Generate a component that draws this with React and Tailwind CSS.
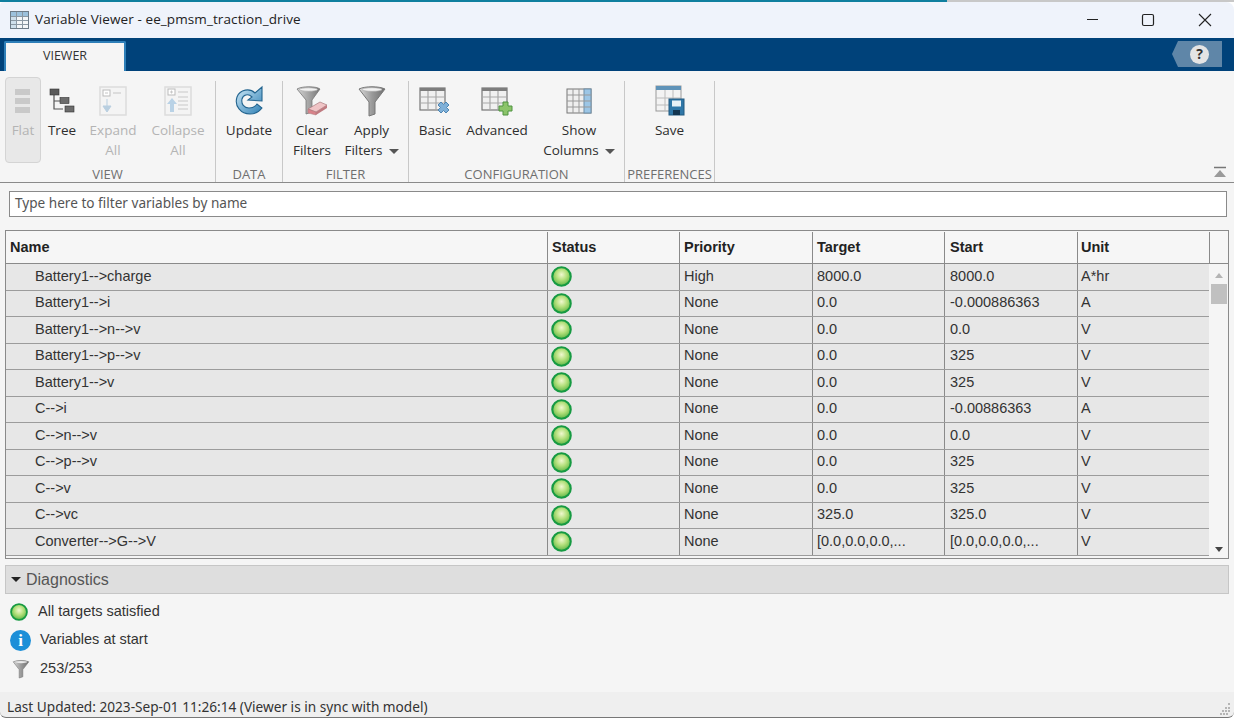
import React from "react";

const ui = "font-['Open_Sans','Noto_Sans',sans-serif]";

function Ball({ size = 21 }) {
  return (
    <svg width={size} height={size} viewBox="0 0 20 20" className="shrink-0">
      <defs>
        <radialGradient id="ballg" cx="50%" cy="40%" r="58%">
          <stop offset="0%" stopColor="#f0f8cf" />
          <stop offset="50%" stopColor="#b4e07c" />
          <stop offset="100%" stopColor="#62b848" />
        </radialGradient>
      </defs>
      <circle cx="10" cy="10" r="8.800" fill="url(#ballg)" stroke="#169a42" strokeWidth="2" />
    </svg>
  );
}

function Funnel({ w = 30, h = 32 }) {
  return (
    <svg width={w} height={h} viewBox="0 0 30 32">
      <defs>
        <linearGradient id="fg" x1="0" x2="1" y1="0" y2="0">
          <stop offset="0" stopColor="#d8d8d8" />
          <stop offset="0.5" stopColor="#9a9a9a" />
          <stop offset="1" stopColor="#6f6f6f" />
        </linearGradient>
      </defs>
      <path d="M2 4 C8 1 22 1 28 4 L18 17 L18 29 L12 31 L12 17 Z" fill="url(#fg)" stroke="#777" strokeWidth="1" />
      <ellipse cx="15" cy="4.500" rx="10" ry="1.800" fill="#f2f2f2" stroke="#aaa" strokeWidth="0.600" />
    </svg>
  );
}

function TableGlyph({ children }) {
  return (
    <svg width="32" height="30" viewBox="0 0 32 30">
      <rect x="1" y="2" width="25" height="22" fill="#f0f0f0" stroke="#777" strokeWidth="1.200" />
      <rect x="1" y="2" width="25" height="3" fill="#7d7d7d" />
      <path d="M9 5V24M17 5V24M1 11H26M1 17H26" stroke="#a8a8a8" strokeWidth="1.200" fill="none" />
      {children}
    </svg>
  );
}

const icons = {
  flat: (
    <svg width="18" height="26" viewBox="0 0 18 26">
      <rect x="1" y="1" width="15" height="6" fill="#c9c9c9" />
      <rect x="1" y="10" width="15" height="6" fill="#c9c9c9" />
      <rect x="1" y="19" width="15" height="6" fill="#c9c9c9" />
    </svg>
  ),
  tree: (
    <svg width="26" height="26" viewBox="0 0 26 26">
      <path d="M5 6V21H14M5 13H11" stroke="#555" strokeWidth="1.200" fill="none" />
      <rect x="1" y="1" width="9" height="6" fill="#5a5a5a" stroke="#333" strokeWidth="0.600" />
      <rect x="11" y="9.500" width="9" height="6" fill="#6c6c6c" stroke="#333" strokeWidth="0.600" />
      <rect x="16" y="18" width="9" height="6" fill="#6c6c6c" stroke="#333" strokeWidth="0.600" />
    </svg>
  ),
  expand: (
    <svg width="28" height="30" viewBox="0 0 28 30">
      <rect x="1" y="1" width="26" height="28" fill="#f4f4f4" stroke="#dcdcdc" strokeWidth="1.500" />
      <rect x="4" y="4" width="7" height="6" fill="#fff" stroke="#bbb" />
      <path d="M6 7H9M14 7H22" stroke="#c4c4c4" />
      <path d="M8 13V20M4 20H12L8 26Z" fill="#b9cfe0" stroke="#b9cfe0" />
    </svg>
  ),
  collapse: (
    <svg width="28" height="30" viewBox="0 0 28 30">
      <rect x="1" y="1" width="26" height="28" fill="#f4f4f4" stroke="#dcdcdc" strokeWidth="1.500" />
      <rect x="4" y="3" width="7" height="6" fill="#fff" stroke="#bbb" />
      <path d="M7.500 4.500V7.500M6 6H9M14 6H24M14 11H24M14 15H24M14 19H24M14 23H24" stroke="#c8c8c8" />
      <path d="M8 12L3 18H6V26H10V18H13Z" fill="#b9d2e6" />
    </svg>
  ),
  update: (
    <svg width="32" height="32" viewBox="0 0 32 32">
      <defs>
        <linearGradient id="ug" x1="0" x2="1" y1="0" y2="1">
          <stop offset="0" stopColor="#cfeaf8" />
          <stop offset="1" stopColor="#2f80b5" />
        </linearGradient>
      </defs>
      <path d="M22 8 C17 3 7 4 4 12 C1 21 8 29 17 29 C22 29 26 27 29 23 L24 19 C22 22 19 23 16 23 C11 23 8 19 9 14 C10 10 15 8 19 12 L15 15 L29 16 L29 2 Z" fill="url(#ug)" stroke="#23648f" strokeWidth="1.100" />
    </svg>
  ),
  clear: (
    <svg width="32" height="32" viewBox="0 0 32 32">
      <defs>
        <linearGradient id="cg" x1="0" x2="1" y1="0" y2="0">
          <stop offset="0" stopColor="#d4d4d4" />
          <stop offset="0.6" stopColor="#9c9c9c" />
          <stop offset="1" stopColor="#777" />
        </linearGradient>
      </defs>
      <path d="M1 4 C6 1 20 1 24 4 L16 15 L16 27 L10 29 L10 15 Z" fill="url(#cg)" stroke="#777" strokeWidth="0.800" />
      <ellipse cx="12.500" cy="4.500" rx="9" ry="1.700" fill="#f2f2f2" stroke="#aaa" strokeWidth="0.600" />
      <path d="M12 24 L24 17 L31 20 L20 27 Z" fill="#f0c4c6" stroke="#a87a7d" strokeWidth="0.700" />
      <path d="M12 24 L20 27 L20 30 L12 28 Z" fill="#d9828a" stroke="#a87a7d" strokeWidth="0.500" />
      <path d="M20 27 L31 20 L31 23 L20 30 Z" fill="#bf7a80" />
    </svg>
  ),
  basic: (
    <TableGlyph>
      <path d="M19 19 L22 16 L24.500 18.500 L27 16 L30 19 L27.500 21.500 L30 24 L27 27 L24.500 24.500 L22 27 L19 24 L21.500 21.500 Z" fill="#7fb0d8" stroke="#4d85b3" />
    </TableGlyph>
  ),
  advanced: (
    <TableGlyph>
      <path d="M22 16H27V20H31V25H27V29H22V25H18V20H22Z" fill="#8cc46a" stroke="#4f9440" />
    </TableGlyph>
  ),
  columns: (
    <svg width="26" height="26" viewBox="0 0 26 26">
      <rect x="1" y="1" width="24" height="24" fill="#efefef" stroke="#777" />
      <rect x="18" y="1" width="7" height="24" fill="#9cc6e6" stroke="#6d8ea8" />
      <path d="M1 7H25M1 13H25M1 19H25M7 1V25M13 1V25" stroke="#999" fill="none" />
    </svg>
  ),
  save: (
    <svg width="30" height="32" viewBox="0 0 30 32">
      <rect x="1" y="1" width="25" height="25" fill="#f3f3f3" stroke="#999" />
      <rect x="1" y="1" width="25" height="4" fill="#5f93b8" />
      <path d="M10 5V26M18 5V20M1 13H26M1 20H18" stroke="#bbb" fill="none" />
      <rect x="14" y="14" width="15" height="16" fill="#2f77a8" stroke="#235a80" />
      <rect x="17" y="15.500" width="9" height="6" fill="#e8f1f7" />
      <rect x="18" y="25" width="7" height="5" fill="#12344f" />
    </svg>
  ),
};

function Btn({ w, icon, lines, caret, disabled, active }) {
  return (
    <div
      className={`relative flex flex-col items-center shrink-0 ${
        active
          ? "bg-[#e8e8e8] border border-[#d4d4d4] rounded-[4px] mt-[1px] h-[86px] pt-[4px]"
          : "h-[86px] pt-[6px]"
      }`}
      style={{ width: w }}
    >
      <div className="h-[38px] flex items-center justify-center">{icon}</div>
      <div
        className={`text-[13.500px] leading-[20px] text-center whitespace-nowrap ${
          disabled ? "text-[#b4b4b4]" : "text-[#2e2e2e]"
        }`}
      >
        {lines.map((l, i) => (
          <div key={i}>
            {l}
            {caret && i === lines.length - 1 ? (
              <span className="inline-block align-middle ml-[6px] w-0 h-0 border-x-[5px] border-x-transparent border-t-[5px] border-t-[#555]" />
            ) : null}
          </div>
        ))}
      </div>
    </div>
  );
}

function Group({ w, label, children, pl = 0 }) {
  return (
    <div className="flex flex-col shrink-0" style={{ width: w }}>
      <div className="flex h-[86px] mt-[5px]" style={{ paddingLeft: pl }}>{children}</div>
      <div className="text-[13px] leading-[18px] text-center text-[#6f6f6f] mt-[3px]">{label}</div>
    </div>
  );
}

const Sep = () => <div className="w-px bg-[#c8c8c8] mt-[10px] h-[101px] shrink-0" />;

const rows = [
  ["Battery1-->charge", "High", "8000.0", "8000.0", "A*hr"],
  ["Battery1-->i", "None", "0.0", "-0.000886363", "A"],
  ["Battery1-->n-->v", "None", "0.0", "0.0", "V"],
  ["Battery1-->p-->v", "None", "0.0", "325", "V"],
  ["Battery1-->v", "None", "0.0", "325", "V"],
  ["C-->i", "None", "0.0", "-0.00886363", "A"],
  ["C-->n-->v", "None", "0.0", "0.0", "V"],
  ["C-->p-->v", "None", "0.0", "325", "V"],
  ["C-->v", "None", "0.0", "325", "V"],
  ["C-->vc", "None", "325.0", "325.0", "V"],
  ["Converter-->G-->V", "None", "[0.0,0.0,0.0,...", "[0.0,0.0,0.0,...", "V"],
];

const hdr = [
  ["Status", "w-[132px] pl-[4px]"],
  ["Priority", "w-[133px] pl-[4px]"],
  ["Target", "w-[132px] pl-[4px]"],
  ["Start", "w-[133px] pl-[5px]"],
  ["Unit", "w-[132px] pl-[3px]"],
];

export default function App() {
  return (
    <div className={`w-[1234px] h-[720px] overflow-hidden bg-white flex flex-col relative ${ui}`}>
      {/* desktop strip */}
      <div className="h-[2px] flex shrink-0">
        <div className="w-[947px] bg-[#0f7f9f]" />
        <div className="flex-1 bg-[#c8c8c8]" />
      </div>

      {/* title bar */}
      <div className="h-[36px] bg-[#eff3fb] flex items-center shrink-0 rounded-tr-[8px] rounded-tl-[4px] pb-[1px]">
        <svg width="19" height="18" viewBox="0 0 19 18" className="ml-[10px] shrink-0">
          <rect x="0.500" y="0.500" width="18" height="17" fill="#f4f6f8" stroke="#6e7c88" />
          <rect x="1" y="1" width="17" height="4" fill="#9cc1dc" />
          <rect x="1" y="5" width="5" height="12" fill="#cfe0ec" />
          <path d="M6.500 1V17M12.500 1V17M1 5.500H18M1 9.500H18M1 13.500H18" stroke="#8b98a3" fill="none" />
        </svg>
        <span className="ml-[6px] text-[13.500px] text-[#222] tracking-[0.1px]">Variable Viewer - ee_pmsm_traction_drive</span>
        <div className="ml-auto flex items-center">
          <svg width="14" height="14" viewBox="0 0 14 14" className="mr-[41px]"><path d="M1 6.500H12" stroke="#222" strokeWidth="1" /></svg>
          <svg width="14" height="14" viewBox="0 0 14 14" className="mr-[43px]"><rect x="1.500" y="1.500" width="11" height="11" rx="1.500" fill="none" stroke="#222" strokeWidth="1.200" /></svg>
          <svg width="14" height="14" viewBox="0 0 14 14" className="mr-[22px]"><path d="M1 1L13 13M13 1L1 13" stroke="#222" strokeWidth="1.100" /></svg>
        </div>
      </div>

      {/* tab band */}
      <div className="h-[33px] bg-[#00427a] flex items-end shrink-0 relative">
        <div className="ml-[4px] w-[122px] h-[30px] bg-[#f5f5f5] border-t-[2px] border-x-[2px] border-[#2e7fb8] rounded-t-[2px] flex items-center justify-center text-[12.500px] text-[#333] pb-[2px]">
          VIEWER
        </div>
        <div className="ml-auto mr-[12px] mb-[4px] w-[50px] h-[26px] flex items-center justify-center bg-[#5f86a8] [clip-path:polygon(12%_0,100%_0,100%_100%,12%_100%,0_50%)]">
          <span className="ml-[5px] w-[19px] h-[19px] rounded-full bg-[#e4e4e4] flex items-center justify-center text-[14px] leading-none font-bold text-[#333]">?</span>
        </div>
      </div>

      {/* ribbon */}
      <div className="h-[112px] bg-[#f5f5f5] border-b border-[#8a8a8a] flex shrink-0 relative">
        <Group w={215} label="VIEW" pl={5}>
          <Btn w={36} icon={icons.flat} lines={["Flat"]} disabled active />
          <Btn w={42} icon={icons.tree} lines={["Tree"]} />
          <Btn w={60} icon={icons.expand} lines={["Expand", "All"]} disabled />
          <Btn w={70} icon={icons.collapse} lines={["Collapse", "All"]} disabled />
        </Group>
        <Sep />
        <Group w={66} label="DATA">
          <Btn w={66} icon={icons.update} lines={["Update"]} />
        </Group>
        <Sep />
        <Group w={125} label="FILTER">
          <Btn w={58} icon={icons.clear} lines={["Clear", "Filters"]} />
          <Btn w={61} icon={<Funnel w={30} h={32} />} lines={["Apply", "Filters"]} caret />
        </Group>
        <Sep />
        <Group w={215} label="CONFIGURATION">
          <Btn w={52} icon={icons.basic} lines={["Basic"]} />
          <Btn w={72} icon={icons.advanced} lines={["Advanced"]} />
          <Btn w={92} icon={icons.columns} lines={["Show", "Columns"]} caret />
        </Group>
        <Sep />
        <Group w={89} label="PREFERENCES">
          <Btn w={89} icon={icons.save} lines={["Save"]} />
        </Group>
        <Sep />
        <svg width="14" height="14" viewBox="0 0 14 14" className="absolute right-[7px] bottom-[2px]">
          <path d="M1 1.500H13" stroke="#777" strokeWidth="1.500" />
          <path d="M7 4L13 11H1Z" fill="#9a9a9a" />
        </svg>
      </div>

      {/* body */}
      <div className="flex-1 bg-[#f5f5f5] flex flex-col min-h-0 px-[5px]">
        <div className="pt-[8px] pl-[4px] pr-[2px]">
          <div className="h-[26px] bg-white border border-[#8a8a8a] flex items-center pl-[5px] pb-[1px] text-[13.600px] text-[#555] font-['Noto_Sans',sans-serif]">
            Type here to filter variables by name
          </div>
        </div>

        {/* table */}
        <div className="mt-[13px] w-[1224px] h-[329px] border border-[#8a8a8a] bg-[#f5f5f5] flex flex-col overflow-hidden font-['Liberation_Sans',sans-serif] text-[14.500px] text-[#333] shrink-0">
          <div className="h-[33px] flex border-b border-[#8a8a8a] shrink-0 font-bold text-[#222] bg-[#f6f6f6] pt-[1px]">
            <div className="w-[542px] border-r border-[#8a8a8a] pl-[4px] flex items-center">Name</div>
            {hdr.map(([h, c]) => (
              <div key={h} className={`${c} border-r border-[#8a8a8a] flex items-center`}>{h}</div>
            ))}
            <div className="flex-1" />
          </div>
          <div className="flex flex-1 min-h-0">
            <div className="w-[1203px] overflow-hidden">
              {rows.map((r) => (
                <div key={r[0]} className="h-[26.500px] w-[1204px] flex bg-[#e7e7e7] border-b-[1.500px] border-[#9c9c9c] box-border">
                  <div className="w-[542px] border-r border-[#8a8a8a] pl-[29px] flex items-center">{r[0]}</div>
                  <div className="w-[132px] border-r border-[#8a8a8a] pl-[3px] flex items-center"><Ball /></div>
                  <div className="w-[133px] border-r border-[#8a8a8a] pl-[4px] flex items-center">{r[1]}</div>
                  <div className="w-[132px] border-r border-[#8a8a8a] pl-[4px] flex items-center whitespace-nowrap">{r[2]}</div>
                  <div className="w-[133px] border-r border-[#8a8a8a] pl-[5px] flex items-center whitespace-nowrap">{r[3]}</div>
                  <div className="w-[132px] pl-[3px] flex items-center">{r[4]}</div>
                </div>
              ))}
            </div>
            <div className="flex-1 flex flex-col items-center relative">
              <div className="mt-[9px] w-0 h-0 border-x-[4px] border-x-transparent border-b-[5px] border-b-[#b4b4b4]" />
              <div className="mt-[6px] w-[16px] h-[20px] bg-[#c0c0c0]" />
              <div className="absolute bottom-[6px] w-0 h-0 border-x-[4px] border-x-transparent border-t-[5px] border-t-[#444]" />
            </div>
          </div>
        </div>

        {/* diagnostics */}
        <div className="mt-[6px] w-[1224px] h-[29px] bg-[#dedede] border border-[#c6c6c6] flex items-center pl-[5px] shrink-0 font-['Liberation_Sans',sans-serif]">
          <span className="w-0 h-0 border-x-[5px] border-x-transparent border-t-[5px] border-t-[#222]" />
          <span className="ml-[5px] text-[16px] text-[#555]">Diagnostics</span>
        </div>
        <div className="flex-1 flex flex-col font-['Liberation_Sans',sans-serif] text-[14.500px] text-[#333]">
          <div className="h-[28px] mt-[4px] flex items-center pl-[5px]">
            <Ball size={18} />
            <span className="ml-[10px]">All targets satisfied</span>
          </div>
          <div className="h-[28px] flex items-center pl-[5px]">
            <span className="w-[21px] h-[21px] rounded-full bg-[#1c8fd8] flex items-center justify-center text-white font-bold text-[17px] leading-none font-['Liberation_Serif',serif]">i</span>
            <span className="ml-[9px]">Variables at start</span>
          </div>
          <div className="h-[29px] flex items-center pl-[7px]">
            <Funnel w={18} h={20} />
            <span className="ml-[10px]">253/253</span>
          </div>
        </div>
      </div>

      {/* status bar */}
      <div className="h-[26px] bg-[#efefef] flex items-center pl-[7px] pt-[5px] text-[13.650px] text-[#333] shrink-0 relative rounded-b-[6px] border-b border-[#777] font-['Noto_Sans',sans-serif]">
        Last Updated: 2023-Sep-01 11:26:14 (Viewer is in sync with model)
        <svg width="14" height="14" viewBox="0 0 14 14" className="absolute right-[1px] bottom-[1px]">
          <g fill="#b5b5b5">
            <rect x="9" y="1" width="2" height="2" />
            <rect x="6" y="5" width="2" height="2" /><rect x="9" y="5" width="2" height="2" />
            <rect x="3" y="8" width="2" height="2" /><rect x="6" y="8" width="2" height="2" /><rect x="9" y="8" width="2" height="2" />
            <rect x="1" y="11" width="2" height="2" /><rect x="4" y="11" width="2" height="2" /><rect x="7" y="11" width="2" height="2" />
          </g>
        </svg>
      </div>
      <div className="h-[2px] bg-white shrink-0" />
    </div>
  );
}
